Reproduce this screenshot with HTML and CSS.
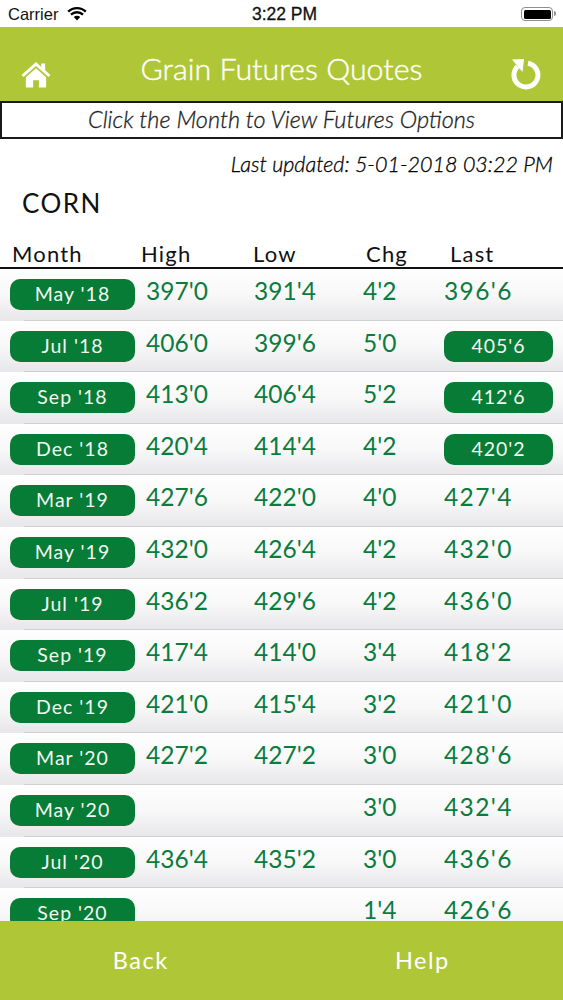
FILE: index.html
```html
<!DOCTYPE html>
<html lang="en">
<head>
<meta charset="utf-8">
<title>Grain Futures Quotes</title>
<link rel="stylesheet" href="styles.css">
</head>
<body>
<div class="screen">
  <div class="status">
    <div class="status-left">
      <span>Carrier</span>
      <svg class="wifi" viewBox="0 0 20 15" width="20" height="15"><path d="M10 14.500 6.800 11a4.600 4.600 0 0 1 6.400 0z" fill="#000"/><path d="M1.200 5.600a12.800 12.800 0 0 1 17.600 0M4 8.600a8.800 8.800 0 0 1 12 0" fill="none" stroke="#000" stroke-width="2.400"/></svg>
    </div>
    <span class="status-time">3:22 PM</span>
    <div class="battery"><div class="battery-fill"></div></div>
  </div>
  <header class="bar">
    <svg class="home" viewBox="0 0 32 28" width="32" height="27"><path d="M16 1 1 14.500l2 2.200L16 5.200l13 11.500 2-2.200-5.500-5V2.500h-4v3.600z" fill="#fff"/><path d="M16 7.500 5.500 16.800V27.500h7.500v-7.500h6v7.500h7.500V16.800z" fill="#fff"/></svg>
    <h1 class="title">Grain Futures Quotes</h1>
    <svg class="refresh" viewBox="0 0 32 34" width="32" height="34"><path d="M18 5.200A12 12 0 1 1 7.500 8.500" fill="none" stroke="#fff" stroke-width="5"/><path d="M2 1.500 14 1 12.500 14z" fill="#fff"/></svg>
  </header>
  <div class="hint">Click the Month to View Futures Options</div>
  <div class="updated">Last updated: 5-01-2018 03:22 PM</div>
  <div class="commodity">CORN</div>
  <div class="thead">
    <span class="th-month">Month</span>
    <span class="th-high">High</span>
    <span class="th-low">Low</span>
    <span class="th-chg">Chg</span>
    <span class="th-last">Last</span>
  </div>
  <main class="rows">
    <div class="row"><span class="pill">May '18</span><span class="cell">397'0</span><span class="cell">391'4</span><span class="cell">4'2</span><span class="last">396'6</span></div>
    <div class="row"><span class="pill">Jul '18</span><span class="cell">406'0</span><span class="cell">399'6</span><span class="cell">5'0</span><span class="pill pill-last">405'6</span></div>
    <div class="row"><span class="pill">Sep '18</span><span class="cell">413'0</span><span class="cell">406'4</span><span class="cell">5'2</span><span class="pill pill-last">412'6</span></div>
    <div class="row"><span class="pill">Dec '18</span><span class="cell">420'4</span><span class="cell">414'4</span><span class="cell">4'2</span><span class="pill pill-last">420'2</span></div>
    <div class="row"><span class="pill">Mar '19</span><span class="cell">427'6</span><span class="cell">422'0</span><span class="cell">4'0</span><span class="last">427'4</span></div>
    <div class="row"><span class="pill">May '19</span><span class="cell">432'0</span><span class="cell">426'4</span><span class="cell">4'2</span><span class="last">432'0</span></div>
    <div class="row"><span class="pill">Jul '19</span><span class="cell">436'2</span><span class="cell">429'6</span><span class="cell">4'2</span><span class="last">436'0</span></div>
    <div class="row"><span class="pill">Sep '19</span><span class="cell">417'4</span><span class="cell">414'0</span><span class="cell">3'4</span><span class="last">418'2</span></div>
    <div class="row"><span class="pill">Dec '19</span><span class="cell">421'0</span><span class="cell">415'4</span><span class="cell">3'2</span><span class="last">421'0</span></div>
    <div class="row"><span class="pill">Mar '20</span><span class="cell">427'2</span><span class="cell">427'2</span><span class="cell">3'0</span><span class="last">428'6</span></div>
    <div class="row"><span class="pill">May '20</span><span class="cell"></span><span class="cell"></span><span class="cell">3'0</span><span class="last">432'4</span></div>
    <div class="row"><span class="pill">Jul '20</span><span class="cell">436'4</span><span class="cell">435'2</span><span class="cell">3'0</span><span class="last">436'6</span></div>
    <div class="row"><span class="pill">Sep '20</span><span class="cell"></span><span class="cell"></span><span class="cell">1'4</span><span class="last">426'6</span></div>
  </main>
  <footer class="foot">
    <span class="foot-link">Back</span>
    <span class="foot-link">Help</span>
  </footer>
</div>
</body>
</html>
```
FILE: styles.css
```css
* { box-sizing: border-box; }
html, body { margin: 0; padding: 0; }
body { background: #fff; font-family: Lato, "Open Sans", sans-serif; }
.screen { width: 563px; height: 1000px; display: flex; flex-direction: column; overflow: hidden; }

.status { height: 27px; flex: none; padding: 1px 26px 0 8px; display: flex; align-items: center; justify-content: space-between; position: relative; font-family: "Liberation Sans", Arial, sans-serif; font-size: 16.500px; color: #111; }
.status-left { display: flex; align-items: center; gap: 9px; }
.wifi { display: block; margin-top: -2px; }
.status-time { position: absolute; left: 6px; right: 0; top: 4px; text-align: center; font-size: 17.500px; -webkit-text-stroke: 0.3px #111; }
.battery { width: 32px; height: 14px; border: 1.500px solid #8f8f8f; border-radius: 4px; padding: 1.500px; position: absolute; right: 10px; top: 7px; }
.battery::after { content: ""; position: absolute; right: -4px; top: 3px; width: 2px; height: 5px; background: #8f8f8f; border-radius: 0 2px 2px 0; }
.battery-fill { width: 100%; height: 100%; background: #000; border-radius: 1.500px; }

.bar { height: 74px; flex: none; background: #afc736; display: flex; align-items: flex-start; justify-content: space-between; padding: 0 20px 0 20px; position: relative; }
.title { position: absolute; left: 0; right: 0; top: 21px; margin: 0; text-align: center; font-size: 30.400px; line-height: 40px; font-weight: 300; -webkit-text-stroke: 0.4px #fff; color: #fff; }
.home { display: block; margin-top: 34px; }
.refresh { display: block; margin-top: 31px; margin-right: 1px; }

.hint { height: 38px; flex: none; border: 2px solid #1a1a1a; text-align: center; font-size: 23.500px; line-height: 32px; font-style: italic; font-weight: 300; -webkit-text-stroke: 0.3px #222; color: #222; }
.updated { flex: none; height: 50px; padding: 11px 10px 0 0; text-align: right; font-size: 21.500px; line-height: 28px; font-style: italic; font-weight: 300; -webkit-text-stroke: 0.3px #000; color: #000; }
.commodity { flex: none; height: 49px; padding: 0 0 0 22px; font-size: 26px; line-height: 28px; letter-spacing: 1.500px; color: #111; }
.thead { flex: none; height: 31px; border-bottom: 2px solid #111; font-size: 22px; line-height: 32px; letter-spacing: 1.200px; color: #111; display: grid; grid-template-columns: 141px 112px 113px 84px 1fr; }
.th-month { padding-left: 12px; }

.rows { flex: 1; min-height: 0; overflow: hidden; }
.row { height: 51.600px; display: grid; grid-template-columns: 146px 108px 109px 81px 1fr; padding-top: 10px; background: linear-gradient(#cfcfd2, #cfcfd2) 24px 100% / 100% 1px no-repeat, linear-gradient(#fefefe 0%, #f8f8f9 50%, #eaeaec 90%, #e8e8ea 100%); color: #0a7c3e; font-size: 24.500px; line-height: 24px; font-weight: 400; }
.cell { display: block; }
.last { display: block; letter-spacing: 1.400px; }
.pill { display: block; width: 125px; height: 31px; margin-left: 10px; background: #067c36; border-radius: 10px; color: #f4f8f2; font-size: 19.500px; line-height: 29.500px; letter-spacing: 1px; text-align: center; }
.pill-last { width: 109px; margin-left: 0; }

.foot { height: 79px; flex: none; background: #afc736; display: grid; grid-template-columns: 1fr 1fr; font-size: 23.500px; line-height: 78px; letter-spacing: 1.500px; color: #fff; text-align: center; }
```
